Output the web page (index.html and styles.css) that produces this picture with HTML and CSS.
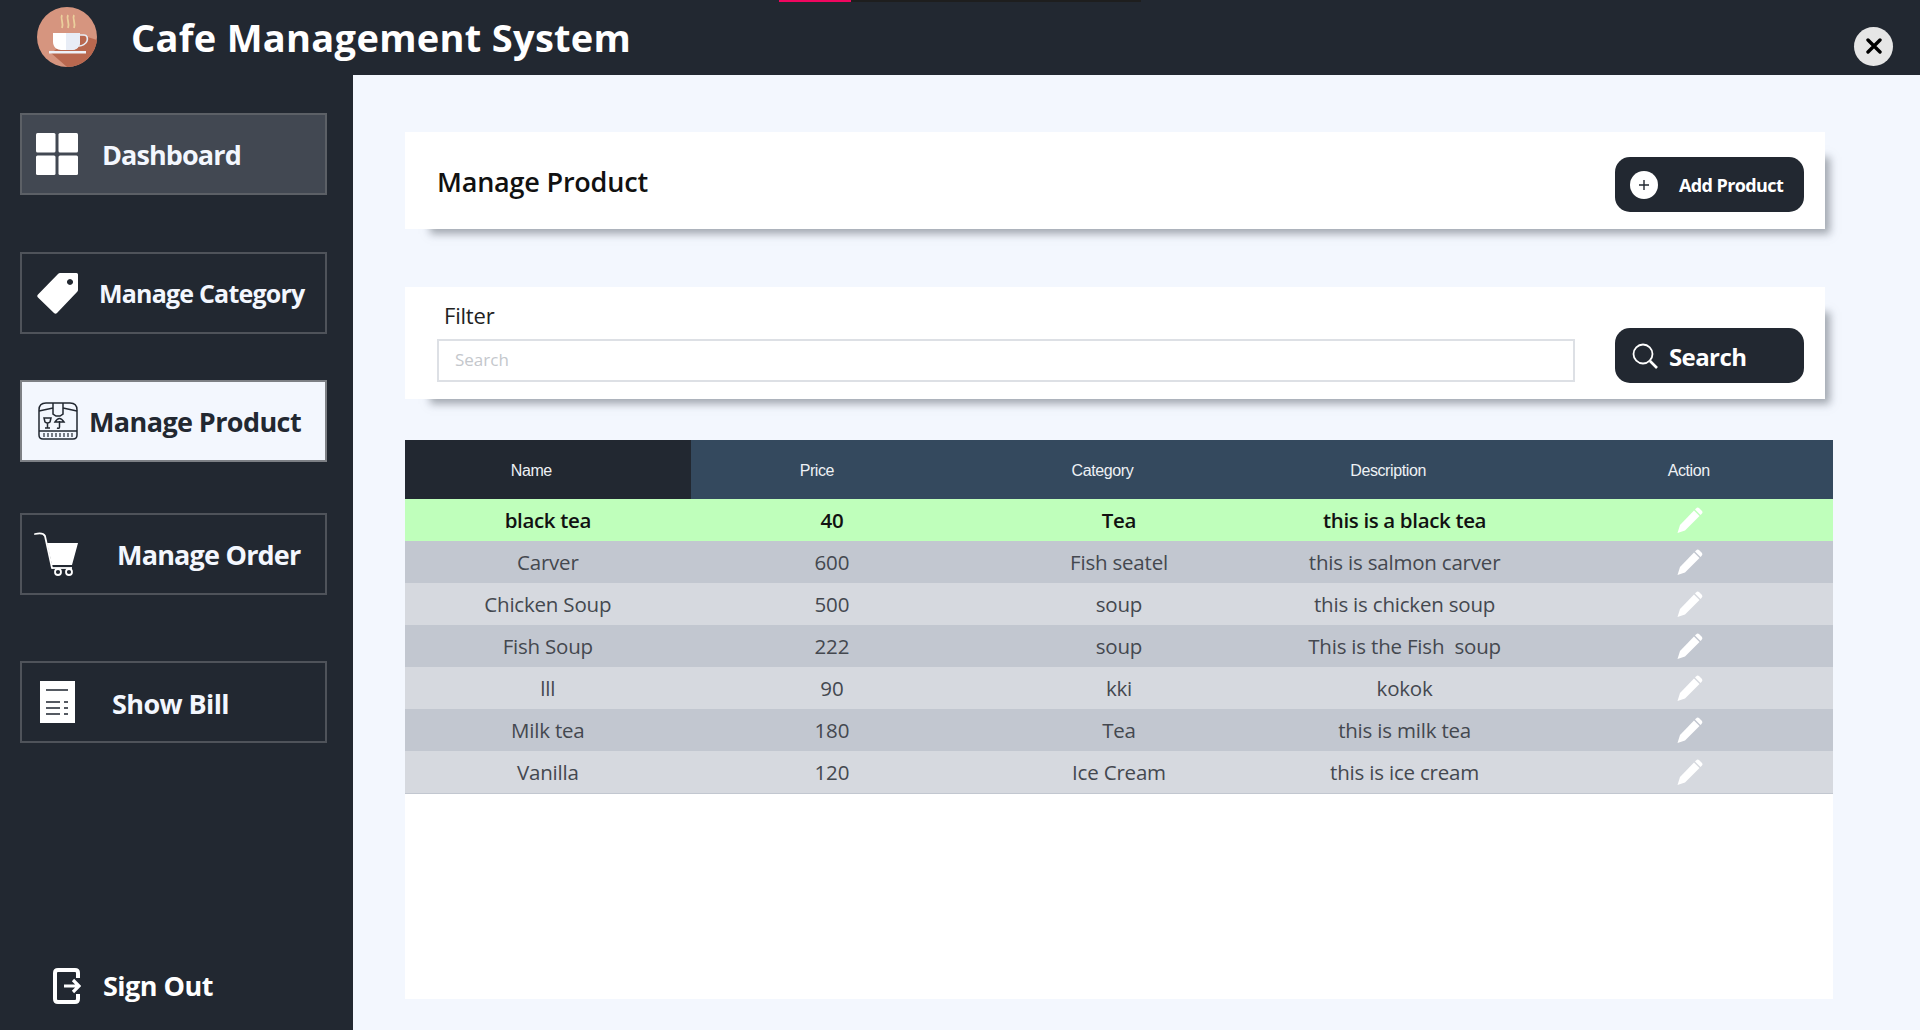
FILE: index.html

```html
<!DOCTYPE html>
<html lang="en">
<head>
    <meta charset="UTF-8">
    <meta name="viewport" content="width=device-width, initial-scale=1.0">
    <title>Cafe Management System</title>
    <link rel="stylesheet" href="styles.css">
</head>
<body>
    <div class="progress"><span class="progress-fill"></span></div>

    <header class="topbar">
        <svg class="logo" viewBox="0 0 60 60" width="60" height="60">
            <circle cx="30" cy="30" r="30" fill="#d6957f"/>
            <path d="M41 27L60 33A30 30 0 0 1 30 60L14 46Z" fill="#b9684f"/>
            <path d="M16 26h27v9c0 5-4 8-8 8h-11c-4 0-8-3-8-8z" fill="#fff"/>
            <path d="M29 26h14v9c0 5-4 8-8 8h-6z" fill="#e8edf6"/>
            <path d="M43 28h4c3 0 4 3 3 6c-1 3-5 5-8 5" fill="none" stroke="#e8edf6" stroke-width="1.600"/>
            <rect x="12" y="44" width="37" height="2.500" fill="#eef1f8"/>
            <path d="M25 8c-2 4 2 7 0 13M31 8c-2 4 2 7 0 13M37 8c-2 4 2 7 0 13" fill="none" stroke="#ebcf9c" stroke-width="1.800"/>
        </svg>
        <h1 class="app-title">Cafe Management System</h1>
        <button class="close-btn">
            <svg viewBox="0 0 16 16" width="16" height="16">
                <path d="M2 2L14 14M14 2L2 14" stroke="#000" stroke-width="3.400" stroke-linecap="round"/>
            </svg>
        </button>
    </header>

    <div class="layout">
        <aside class="sidebar">
            <a class="nav-item nav-dashboard">
                <svg class="nav-icon" viewBox="0 0 42 42" width="42" height="42">
                    <rect x="0" y="0" width="19.500" height="19.500" rx="1.500" fill="#fff"/>
                    <rect x="22.500" y="0" width="19.500" height="19.500" rx="1.500" fill="#fff"/>
                    <rect x="0" y="22.500" width="19.500" height="19.500" rx="1.500" fill="#fff"/>
                    <rect x="22.500" y="22.500" width="19.500" height="19.500" rx="1.500" fill="#fff"/>
                </svg>
                <span>Dashboard</span>
            </a>
            <a class="nav-item nav-category">
                <svg class="nav-icon" viewBox="0 0 41 41" width="41" height="41">
                    <path fill-rule="evenodd" d="M21 1Q22 0 23 0H39.500Q41 0 41 1.500V17Q41 18 40 19L20 40Q18.500 41.500 17 40L1 24.500Q-0.500 23 1 21.500ZM33 6a3 3 0 1 0 .01 0Z" fill="#fff"/>
                </svg>
                <span>Manage Category</span>
            </a>
            <a class="nav-item nav-product active">
                <svg class="nav-icon" viewBox="0 0 40 38" width="40" height="38" fill="none" stroke="#222831" stroke-width="1.500">
                    <path d="M8 1H32Q39 1 39 8V33Q39 37 35 37H5Q1 37 1 33V8Q1 1 8 1Z"/>
                    <path d="M1 9L15 6M39 9L25 6M1 29H39"/>
                    <path d="M15 1V12L18 14H22L25 12V1"/>
                    <path d="M6 31V35M10 31V35M14 31V35M18 31V35M22 31V35M26 31V35M30 31V35M34 31V35" stroke-width="1.200"/>
                    <path d="M6 16H13L12 20Q9.500 22 7 20ZM9.500 21V26M7 26H12"/>
                    <path d="M17 20Q21.500 13 26 20ZM21.500 19V25Q21.500 27 19 26"/>
                </svg>
                <span>Manage Product</span>
            </a>
            <a class="nav-item nav-order">
                <svg class="nav-icon" viewBox="0 0 44 44" width="44" height="44">
                    <path d="M1 2Q9 0 11 4L18 36" fill="none" stroke="#fff" stroke-width="1.800" stroke-linecap="round"/>
                    <path d="M13 11H44L38 33H18Z" fill="#fff"/>
                    <path d="M18 36H38" stroke="#fff" stroke-width="1.800"/>
                    <circle cx="24" cy="40" r="3" fill="none" stroke="#fff" stroke-width="1.800"/>
                    <circle cx="35" cy="40" r="3" fill="none" stroke="#fff" stroke-width="1.800"/>
                </svg>
                <span>Manage Order</span>
            </a>
            <a class="nav-item nav-bill">
                <svg class="nav-icon" viewBox="0 0 35 42" width="35" height="42">
                    <rect width="35" height="42" fill="#fff"/>
                    <path d="M6 9H28M6 21H20M24 21H28M6 27H20M24 27H28M6 33H20M24 33H28" stroke="#555a62" stroke-width="2"/>
                </svg>
                <span>Show Bill</span>
            </a>
            <a class="sign-out">
                <svg viewBox="0 0 28 36" width="28" height="36" fill="none" stroke="#fff" stroke-width="4">
                    <path d="M25 10V5Q25 2 22 2H5Q2 2 2 5V31Q2 34 5 34H22Q25 34 25 31V26"/>
                    <path d="M11 18H26M20 12L26 18L20 24" stroke-width="3.200"/>
                </svg>
                <span>Sign Out</span>
            </a>
        </aside>

        <main class="content">
            <section class="card card-title">
                <h2>Manage Product</h2>
                <button class="dark-btn add-btn">
                    <svg viewBox="0 0 28 28" width="28" height="28">
                        <circle cx="14" cy="14" r="14" fill="#fff"/>
                        <path d="M14 9V19M9 14H19" stroke="#222831" stroke-width="1.400"/>
                    </svg>
                    <span>Add Product</span>
                </button>
            </section>

            <section class="card card-filter">
                <div class="filter-field">
                    <label for="search">Filter</label>
                    <input type="text" id="search" placeholder="Search">
                </div>
                <button class="dark-btn search-btn">
                    <svg viewBox="0 0 26 26" width="26" height="26" fill="none" stroke="#fff">
                        <circle cx="11" cy="11" r="9.500" stroke-width="1.800"/>
                        <path d="M18 18L25 25" stroke-width="2.600"/>
                    </svg>
                    <span>Search</span>
                </button>
            </section>

            <section class="table-panel">
                <table class="product-table">
                    <thead>
                        <tr>
                            <th class="sorted">Name</th>
                            <th>Price</th>
                            <th>Category</th>
                            <th>Description</th>
                            <th>Action</th>
                        </tr>
                    </thead>
                    <tbody id="rows"></tbody>
                </table>
            </section>
        </main>
    </div>

    <script>
        var products = [
            ["black tea", "40", "Tea", "this is a black tea"],
            ["Carver", "600", "Fish seatel", "this is salmon carver"],
            ["Chicken Soup", "500", "soup", "this is chicken soup"],
            ["Fish Soup", "222", "soup", "This is the Fish  soup"],
            ["lll", "90", "kki", "kokok"],
            ["Milk tea", "180", "Tea", "this is milk tea"],
            ["Vanilla", "120", "Ice Cream", "this is ice cream"]
        ];
        var pencil = '<svg viewBox="0 0 26 26" width="26" height="26" class="pencil">' +
            '<path d="M17 3.500L22.500 9L8 23.500L0.500 26L3 18Z" fill="#fff"/>' +
            '<path d="M19 1.500Q20.500 0 22 1L25 4Q26 5.500 24.500 7L23.500 8L18 2.500Z" fill="#fff"/></svg>';
        var html = "";
        products.forEach(function (p, i) {
            html += '<tr class="' + (i === 0 ? "selected" : "") + '">';
            p.forEach(function (cell) {
                html += "<td>" + cell + "</td>";
            });
            html += "<td>" + pencil + "</td></tr>";
        });
        document.getElementById("rows").innerHTML = html;
    </script>
</body>
</html>
```

FILE: styles.css

```css
* {
    box-sizing: border-box;
}
body {
    margin: 0;
    height: 1030px;
    overflow: hidden;
    background-color: #222831;
    font-family: "Open Sans", Arial, sans-serif;
    color: #222831;
    position: relative;
}
.progress {
    position: absolute;
    top: 0;
    left: 779px;
    width: 362px;
    height: 2px;
    background-color: #1e1e1e;
}
.progress-fill {
    display: block;
    width: 72px;
    height: 2px;
    background-color: #f0065f;
}

/* top bar */
.topbar {
    height: 75px;
    display: flex;
    align-items: center;
    padding-left: 37px;
    padding-right: 27px;
}
.logo {
    margin-top: -1px;
}
.app-title {
    margin: -1px 0 0 34px;
    font-size: 38px;
    font-weight: 700;
    letter-spacing: 0.3px;
    color: #fff;
}
.close-btn {
    margin-left: auto;
    margin-top: 17px;
    width: 39px;
    height: 39px;
    border: none;
    border-radius: 50%;
    background-color: #e6e6e6;
    display: flex;
    align-items: center;
    justify-content: center;
    padding: 0;
}

.layout {
    display: flex;
    height: 955px;
}

/* sidebar */
.sidebar {
    width: 353px;
    padding: 38px 26px 26px 20px;
    display: flex;
    flex-direction: column;
    background-color: #222831;
}
.nav-item {
    height: 82px;
    display: flex;
    align-items: center;
    border: 2px solid #4f535a;
    color: #f3f7fe;
    font-size: 27px;
    font-weight: 700;
    letter-spacing: -0.8px;
    flex-shrink: 0;
}
.nav-dashboard {
    background-color: #424852;
    border-color: #5c6066;
    padding-left: 14px;
}
.nav-dashboard span {
    margin-left: 24px;
    letter-spacing: -0.9px;
}
.nav-category {
    margin-top: 57px;
    padding-left: 15px;
    font-size: 25px;
}
.nav-category span {
    margin-left: 21px;
}
.nav-product {
    margin-top: 46px;
    padding-left: 16px;
}
.nav-product span {
    margin-left: 11px;
    letter-spacing: -0.6px;
}
.nav-item.active {
    background-color: #f3f7fe;
    border-color: #7d8085;
    color: #222831;
}
.nav-order {
    margin-top: 51px;
    padding-left: 12px;
}
.nav-order span {
    margin-left: 39px;
    padding-top: 1px;
}
.nav-bill {
    margin-top: 66px;
    padding-left: 18px;
}
.nav-bill span {
    margin-left: 37px;
    padding-top: 2px;
    letter-spacing: -0.6px;
}
.sign-out {
    margin-top: auto;
    padding-left: 33px;
    display: flex;
    align-items: center;
    color: #fff;
    font-size: 27px;
    font-weight: 700;
    letter-spacing: -0.5px;
}
.sign-out span {
    margin-left: 22px;
}

/* main content */
.content {
    flex: 1;
    padding: 57px 87px 31px 52px;
    background-color: #f3f7fe;
    display: flex;
    flex-direction: column;
}
.card {
    width: 1420px;
    display: flex;
    background-color: #fff;
    box-shadow: 15px 15px 8px -10px rgba(110, 116, 126, 0.6);
    padding-left: 32px;
    padding-right: 21px;
}
.card-title {
    height: 97px;
    justify-content: space-between;
}
.card-title h2 {
    margin: 31px 0 0 0;
    font-size: 27px;
    line-height: 37px;
    font-weight: 600;
    letter-spacing: -0.2px;
    color: #111;
}
.card-filter {
    height: 112px;
    margin-top: 58px;
    justify-content: space-between;
}
.filter-field {
    width: 1138px;
}
.filter-field label {
    display: block;
    margin: 13px 0 9px 7px;
    font-size: 22px;
    line-height: 30px;
    letter-spacing: -0.2px;
    color: #222;
}
.filter-field input {
    display: block;
    width: 100%;
    height: 43px;
    padding: 0 16px 2px;
    border: 2px solid #dde0e5;
    font-family: inherit;
    font-size: 17px;
    outline: none;
}
.filter-field input::placeholder {
    color: #c4c7cc;
}
.dark-btn {
    width: 189px;
    height: 55px;
    border: none;
    border-radius: 15px;
    background-color: #222831;
    color: #fff;
    font-family: inherit;
    display: flex;
    align-items: center;
    padding: 0;
}
.add-btn {
    margin-top: 25px;
    padding-left: 15px;
    font-size: 18px;
    font-weight: 700;
    letter-spacing: -0.6px;
}
.add-btn span {
    margin-left: 21px;
}
.search-btn {
    margin-top: 41px;
    padding-left: 17px;
    font-size: 24px;
    font-weight: 700;
    letter-spacing: -0.6px;
}
.search-btn span {
    margin-left: 11px;
    padding-top: 2px;
}

/* table */
.table-panel {
    width: 1428px;
    height: 559px;
    margin-top: 41px;
    background-color: #fff;
}
.product-table {
    width: 100%;
    table-layout: fixed;
    border-collapse: collapse;
}
.product-table th {
    height: 59px;
    padding: 3px 33px 0 0;
    background-color: #34495e;
    color: #eef1f5;
    font-family: "Liberation Sans", Arial, sans-serif;
    font-size: 16px;
    font-weight: 400;
    letter-spacing: -0.4px;
}
.product-table th:nth-child(5) {
    padding-right: 3px;
}
.product-table th.sorted {
    background-color: #222831;
}
.product-table td {
    height: 42px;
    padding: 0;
    text-align: center;
    vertical-align: middle;
    font-size: 20.5px;
    font-weight: 500;
    letter-spacing: -0.2px;
    color: #44484f;
    white-space: pre;
}
.product-table td:nth-child(2) {
    padding-right: 3px;
}
.product-table tbody tr:nth-child(odd) {
    background-color: #d6d9df;
}
.product-table tbody tr:nth-child(even) {
    background-color: #c2c7d0;
}
.product-table tbody tr:last-child {
    border-bottom: 1px solid #c2c7d0;
}
.product-table tbody tr.selected {
    background-color: #bfffbb;
}
.product-table tr.selected td {
    color: #111;
    font-weight: 600;
    letter-spacing: -0.35px;
}
.pencil {
    display: block;
    margin: 0 auto;
}
```
